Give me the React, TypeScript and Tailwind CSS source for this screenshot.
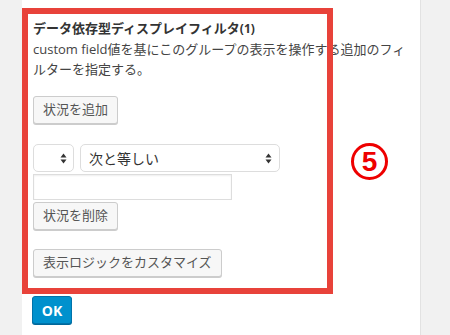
import React from "react";

function Arrows() {
  return (
    <svg width="7" height="11" viewBox="0 0 7 11" className="shrink-0">
      <path d="M3.5 0.5 L6.5 4.5 L0.5 4.5 Z" fill="#333" />
      <path d="M3.5 10.5 L6.5 6.5 L0.5 6.5 Z" fill="#333" />
    </svg>
  );
}

function WpButton({ children }: { children: React.ReactNode }) {
  return (
    <button className="flex h-[28px] items-center whitespace-nowrap rounded-[3px] border border-[#cccccc] bg-[#f7f7f7] px-[9px] text-[13px] text-[#555] shadow-[0_1px_0_#cccccc]">
      {children}
    </button>
  );
}

export default function App() {
  return (
    <div
      className="flex h-[335px] w-[450px] overflow-hidden bg-[#f1f1f1] text-[#444]"
      style={{ fontFamily: '"Open Sans", "Noto Sans CJK JP", sans-serif' }}
    >
      <div className="w-[22px] shrink-0 bg-[#f1f1f1]" />
      <div className="relative w-[398px] shrink-0 bg-white">
        <div className="flex flex-col items-start pl-[11px] pt-[18px]">
          <div className="whitespace-nowrap text-[13px] font-bold leading-[20px] text-[#333]">
            データ依存型ディスプレイフィルタ<span className="text-[12px]">(1)</span>
          </div>
          <p className="whitespace-nowrap text-[13px] leading-[20px]">
            custom field値を基にこのグループの表示を操作する追加のフィ
            <br />
            ルターを指定する。
          </p>

          <div className="mt-[17px]">
            <WpButton>状況を追加</WpButton>
          </div>

          <div className="mt-[20px] flex gap-[6px]">
            <div className="flex h-[28px] w-[41px] items-center justify-end rounded-[5px] border border-[#dddddd] bg-white pr-[6px]">
              <Arrows />
            </div>
            <div className="flex h-[28px] w-[200px] items-center justify-between rounded-[5px] border border-[#dddddd] bg-white pl-[8px] pr-[7px] text-[14px] text-[#333]">
              <span>次と等しい</span>
              <Arrows />
            </div>
          </div>

          <input
            type="text"
            className="mt-[2px] h-[26px] w-[199px] border border-[#dddddd] bg-white shadow-[inset_0_1px_2px_rgba(0,0,0,0.07)]"
          />

          <div className="mt-[2px]">
            <WpButton>状況を削除</WpButton>
          </div>

          <div className="mt-[19px]">
            <WpButton>表示ロジックをカスタマイズ</WpButton>
          </div>

          <button className="mt-[19px] -ml-px flex h-[28px] w-[40px] items-center justify-center rounded-[3px] border border-[#0073aa] bg-[#0091cd] text-[14px] font-bold text-white shadow-[0_1px_0_#006799]">
            OK
          </button>
        </div>

        {/* annotation frame */}
        <div className="pointer-events-none absolute left-0 top-[8px] h-[286px] w-[311px] border-[6px] border-[#e8423a]" />
        <div
          className="absolute left-[329px] top-[143px] flex h-[37px] w-[37px] items-center justify-center rounded-full border-[3.5px] border-[#ee0000] text-[28px] font-bold leading-none text-[#ee0000]"
          style={{ fontFamily: '"Liberation Sans", sans-serif' }}
        >
          5
        </div>
      </div>
      <div className="flex-1 border-l border-[#e2e2e2] bg-[#f1f1f1]" />
    </div>
  );
}
